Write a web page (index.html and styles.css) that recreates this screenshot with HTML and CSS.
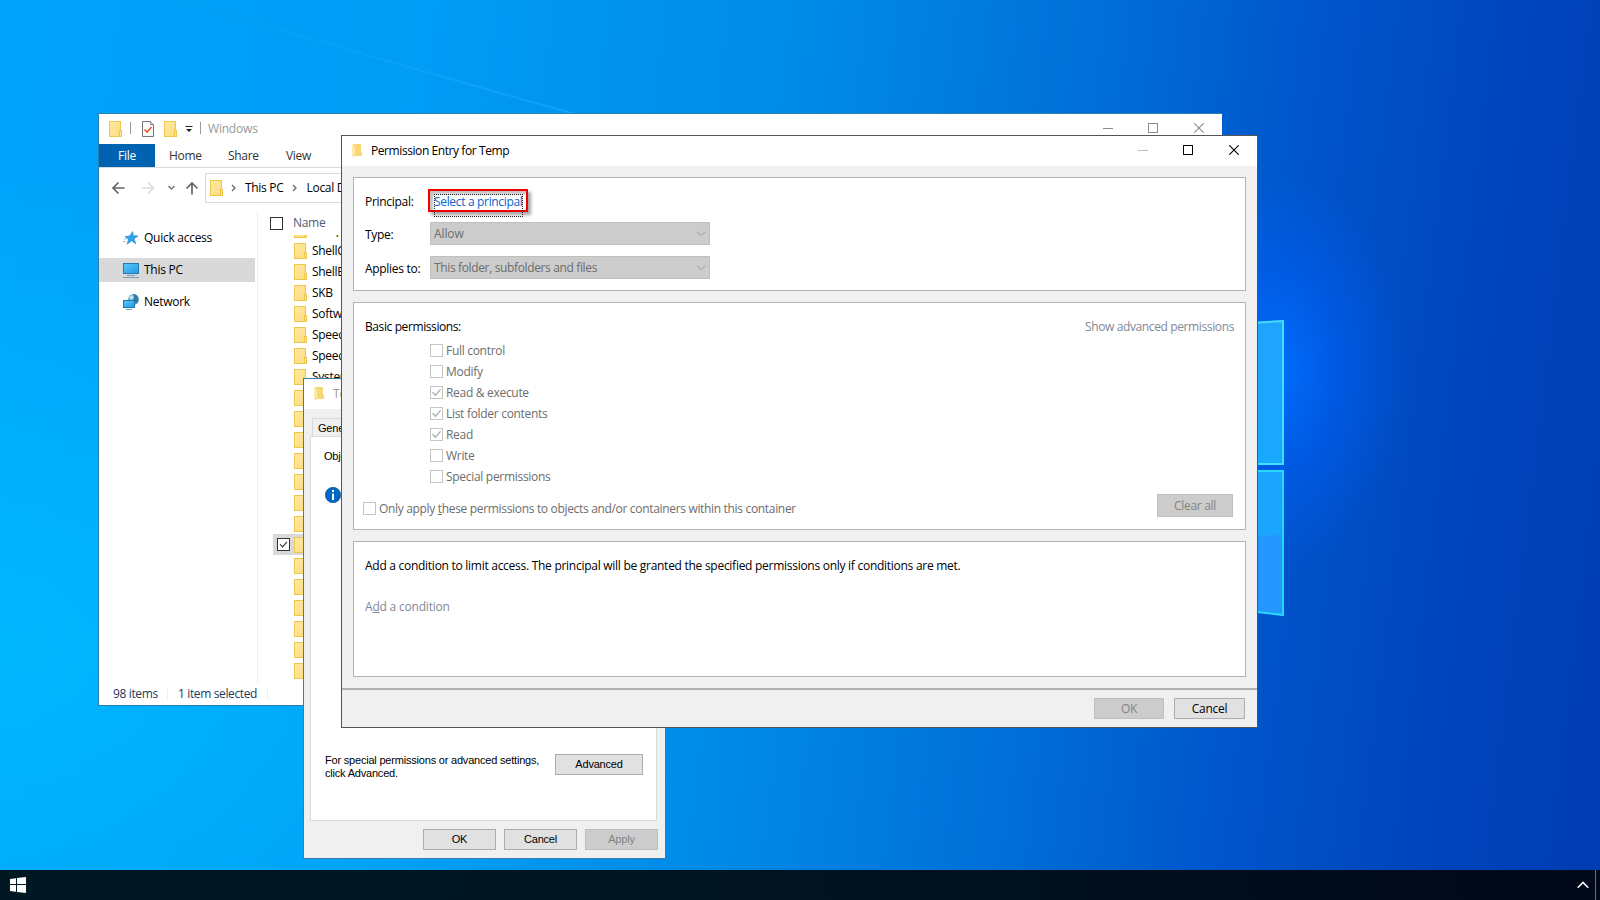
FILE: index.html
```html
<!DOCTYPE html>
<html lang="en">
<head>
  <meta charset="UTF-8" />
  <meta name="viewport" content="width=device-width, initial-scale=1.0" />
  <title>Permission Entry for Temp</title>
  <link rel="stylesheet" href="styles.css">
</head>
<body>
  <svg width="0" height="0" class="defs">
    <defs>
      <linearGradient id="fold" x1="0" y1="0" x2="1" y2="1">
        <stop offset="0" stop-color="#ffeaa5" /><stop offset="1" stop-color="#fbdc7c" />
      </linearGradient>
      <linearGradient id="screen" x1="0" y1="0" x2="1" y2="1">
        <stop offset="0" stop-color="#5cc8fa" /><stop offset="1" stop-color="#1d9bea" />
      </linearGradient>
      <linearGradient id="pane" x1="0" y1="0" x2="0" y2="1">
        <stop offset="0" stop-color="#20a4ff" /><stop offset="1" stop-color="#18a8ff" />
      </linearGradient>
      <linearGradient id="beam" x1="0" y1="0" x2="1" y2="0">
        <stop offset="0" stop-color="#30b4ff" stop-opacity="0" /><stop offset="1" stop-color="#30b4ff" stop-opacity=".4" />
      </linearGradient>
      <symbol id="folder" viewBox="0 0 13 16">
        <rect x=".5" y=".5" width="11" height="15" fill="url(#fold)" stroke="#edc650" />
        <rect x="10.5" y="9.5" width="2" height="6" fill="#ffe692" stroke="#edc650" />
      </symbol>
      <symbol id="folder-small" viewBox="0 0 10 13">
        <path d="M1 0h8v8h1v4H3v1H1V12H0V1h1z" fill="#f8d775" />
        <path d="M0 1l3 1v11l-2-1H0z" fill="#ffe9a8" />
      </symbol>
      <symbol id="tick" viewBox="0 0 13 13">
        <path d="M2.5 6.3l3 3 5-6" fill="none" stroke="currentColor" stroke-width="1.3" />
      </symbol>
      <symbol id="close" viewBox="0 0 10 10">
        <path d="M.3.3l9.4 9.4M9.7.3L.3 9.7" stroke="currentColor" stroke-width="1.1" />
      </symbol>
      <symbol id="chev" viewBox="0 0 10 6">
        <path d="M1 .8l4 4 4-4" fill="none" stroke="currentColor" />
      </symbol>
    </defs>
  </svg>

  <svg class="wallpaper" width="1600" height="870">
    <path d="M180 0Q380 60 575 114" fill="none" stroke="url(#beam)" stroke-width="2" />
    <path d="M1250 323L1283 321V464H1250z" fill="url(#pane)" stroke="#3fe0ff" stroke-width="2" />
    <path d="M1250 471H1283V615L1250 611z" fill="#2397ff" stroke="#25d8ff" stroke-width="2" />
    <path d="M1250 472H1282V534L1250 538z" fill="#1ba5ff" />
  </svg>

  <div class="window explorer">
    <div class="ex-title">
      <svg class="f16"><use href="#folder" /></svg>
      <span class="bar bar-a"></span>
      <svg class="doc" width="12" height="16" viewBox="0 0 12 16">
        <path d="M.5.5h8l3 3v12H.5z" fill="#fbfbfb" stroke="#777" /><path d="M8.5.5v3h3" fill="#ddd" stroke="#888" />
        <path d="M2.5 8.5l2.5 2.5 4.500-5" fill="none" stroke="#f05a28" stroke-width="1.6" />
      </svg>
      <svg class="f16 f-b"><use href="#folder" /></svg>
      <svg class="qat" width="8" height="6" viewBox="0 0 8 6"><path d="M.5 0h7v1h-7zM1 3h6L4 6z" fill="#222" /></svg>
      <span class="bar bar-b"></span>
      <span class="ex-name">Windows</span>
      <div class="caption">
        <i class="min"></i><i class="max"></i><svg width="10" height="10"><use href="#close" /></svg>
      </div>
    </div>
    <div class="ribbon">
      <span class="file">File</span><span class="t-home">Home</span><span class="t-share">Share</span><span class="t-view">View</span>
    </div>
    <div class="nav">
      <svg width="100" height="30" viewBox="0 0 100 30" fill="none">
        <path d="M14 15H25.500M19.500 9.500L14 15l5.500 5.500" stroke="#666" stroke-width="1.700" />
        <path d="M43 15h11.500M49 9.500l5.500 5.500-5.500 5.500" stroke="#ddd" stroke-width="1.700" />
        <path d="M69.500 13l3 3 3-3" stroke="#777" stroke-width="1.500" />
        <path d="M93 21.500V10M87.500 15.500l5.500-5.500 5.500 5.500" stroke="#666" stroke-width="1.700" />
      </svg>
      <div class="address">
        <svg class="f16"><use href="#folder" /></svg>
        <svg class="crumb" width="6" height="8"><path d="M1 1l3 3-3 3" fill="none" stroke="#666" stroke-width="1.300" /></svg>
        <span class="c-pc">This PC</span>
        <svg class="crumb" width="6" height="8"><path d="M1 1l3 3-3 3" fill="none" stroke="#666" stroke-width="1.300" /></svg>
        <span>Local Disk (C:)</span>
      </div>
    </div>
    <div class="ex-body">
      <div class="side">
        <div class="item">
          <svg width="16" height="16" viewBox="0 0 16 16"><path d="M9.500 1.500l.8 4.200 4.700.2-4 2.900 1.800 5-4.300-3-4.300 3.400 1.300-5L2 6.600l4.800-.6z" fill="#2ea3ea" stroke="#1884c8" stroke-width=".6" /><path d="M0 11.500h3M1 9h3" stroke="#8ccaf2" /></svg>
          <span>Quick access</span>
        </div>
        <div class="item on">
          <svg width="16" height="16" viewBox="0 0 16 16"><rect x=".5" y="1.500" width="15" height="10" fill="url(#screen)" stroke="#2478a8" /><path d="M4 13.500h8M0 15.500h16" stroke="#7d9db5" /></svg>
          <span>This PC</span>
        </div>
        <div class="item">
          <svg width="16" height="16" viewBox="0 0 16 16"><circle cx="10.500" cy="5.500" r="5.500" fill="#6fb4d6" /><path d="M10 0a5.500 5.500 0 0 1 3 10l-3-4z" fill="#2e7ba6" /><path d="M6 3l4-2 1 3-3 2z" fill="#c2e2ee" /><rect x=".5" y="6.500" width="11" height="7" fill="url(#screen)" stroke="#2478a8" /><path d="M3 15.500h6" stroke="#7d9db5" /></svg>
          <span>Network</span>
        </div>
      </div>
      <div class="files">
        <div class="head"><i class="box"></i><span>Name</span></div>
        <div class="list" id="list"></div>
      </div>
    </div>
    <div class="status"><span class="s1">98 items</span><span class="s2">1 item selected</span></div>
  </div>

  <div class="window props">
    <div class="pr-title"><svg width="10" height="13"><use href="#folder-small" /></svg><span>Temp Properties</span></div>
    <div class="pr-body">
      <span class="tab">General</span>
      <div class="sheet">
        <p class="obj">Object name:</p>
        <svg width="16" height="16" viewBox="0 0 16 16"><circle cx="8" cy="8" r="7.700" fill="#0067c5" stroke="#04457f" stroke-width=".6" /><path d="M7 3h2v2H7zM7 6.500h2V13H7z" fill="#fff" /></svg>
        <div class="adv">
          <p>For special permissions or advanced settings,<br>click Advanced.</p>
          <button>Advanced</button>
        </div>
      </div>
      <div class="pr-foot"><button>OK</button><button>Cancel</button><button disabled>Apply</button></div>
    </div>
  </div>

  <div class="window entry">
    <div class="en-title">
      <svg width="10" height="13"><use href="#folder-small" /></svg>
      <span>Permission Entry for Temp</span>
      <div class="caption">
        <i class="min"></i><i class="max"></i><svg width="10" height="10"><use href="#close" /></svg>
      </div>
    </div>
    <div class="en-body">
      <div class="panel p1">
        <label>Principal:</label><div class="pick"><a>Select a principal</a></div>
        <label>Type:</label><div class="select"><span class="allow">Allow</span><svg width="10" height="6"><use href="#chev" /></svg></div>
        <label>Applies to:</label><div class="select last"><span class="applies">This folder, subfolders and files</span><svg width="10" height="6"><use href="#chev" /></svg></div>
      </div>
      <div class="panel p2">
        <div class="row"><span class="basic">Basic permissions:</span><span class="muted show">Show advanced permissions</span></div>
        <div class="perms">
          <div class="perm"><i class="cb"></i>Full control</div>
          <div class="perm"><i class="cb"></i>Modify</div>
          <div class="perm"><i class="cb"><svg width="13" height="13"><use href="#tick" /></svg></i>Read &amp; execute</div>
          <div class="perm"><i class="cb"><svg width="13" height="13"><use href="#tick" /></svg></i>List folder contents</div>
          <div class="perm"><i class="cb"><svg width="13" height="13"><use href="#tick" /></svg></i>Read</div>
          <div class="perm"><i class="cb"></i>Write</div>
          <div class="perm"><i class="cb"></i>Special permissions</div>
        </div>
        <div class="row only">
          <div class="perm"><i class="cb"></i><span>Only apply <u>t</u>hese permissions to objects and/or containers within this container</span></div>
          <button disabled>Clear all</button>
        </div>
      </div>
      <div class="panel p3">
        <p class="limit">Add a condition to limit access. The principal will be granted the specified permissions only if conditions are met.</p>
        <p class="muted add">A<u>d</u>d a condition</p>
      </div>
    </div>
    <div class="en-foot"><button disabled>OK</button><button>Cancel</button></div>
  </div>

  <div class="taskbar">
    <svg width="16" height="16" viewBox="0 0 16 16"><path d="M0 2L6 1.200V7H0zM7 1L16 0V7H7zM0 8H6V14.800L0 14zM7 8H16V16L7 15z" fill="#fff" /></svg>
    <svg class="tray" width="12" height="8" viewBox="0 0 12 8"><path d="M.7 6.700L6 1.400l5.300 5.300" fill="none" stroke="#fff" stroke-width="1.500" /></svg>
    <span class="peek"></span>
  </div>

  <script>
    const names = ["Setup", "ShellComponents", "ShellExperiences", "SKB", "SoftwareDistribution", "Speech", "Speech_OneCore", "System"];
    const list = document.getElementById("list");
    for (let i = 0; i < 22; i++) {
      const row = document.createElement("div");
      row.className = i === 15 ? "file-row picked" : "file-row";
      row.innerHTML = (i === 15 ? '<i class="box"><svg width="11" height="11"><use href="#tick" /></svg></i>' : "") +
        '<svg class="f16"><use href="#folder" /></svg><span>' + (names[i] || "") + "</span>";
      list.appendChild(row);
    }
  </script>
</body>
</html>
```
FILE: styles.css
```css
* {
  box-sizing: border-box;
}
body {
  margin: 0;
  width: 1600px;
  height: 900px;
  overflow: hidden;
  position: relative;
  font-family: "Open Sans", "Noto Sans", sans-serif;
  font-size: 12px;
  line-height: 16px;
  letter-spacing: -0.3px;
  color: #000;
  background:
    radial-gradient(ellipse 130px 200px at 1275px 370px, rgba(0, 110, 255, 0.95), rgba(0, 96, 250, 0.5) 50%, rgba(0, 80, 230, 0) 100%),
    radial-gradient(ellipse 700px 500px at 0 650px, rgba(0, 188, 255, 0.8), rgba(0, 184, 255, 0) 100%),
    linear-gradient(97deg, #00a4fb 0%, #009cf5 25%, #008ae8 48%, #0070d8 64%, #0054ca 78%, #0044bc 90%, #003cb2 100%);
}
p {
  margin: 0;
}
svg {
  flex: none;
  display: block;
}
.defs,
.wallpaper {
  position: absolute;
  top: 0;
  left: 0;
}
.f16 {
  width: 13px;
  height: 16px;
}
.window {
  position: absolute;
  display: flex;
  flex-direction: column;
  overflow: hidden;
  white-space: nowrap;
}
button {
  font: inherit;
  letter-spacing: inherit;
  padding: 0;
  height: 21px;
  background: #e1e1e1;
  border: 1px solid #adadad;
  color: #000;
}
button:disabled {
  background: #ccc;
  border-color: #bfbfbf;
  color: #838383;
}
.caption {
  margin-left: auto;
  display: flex;
  align-items: center;
  gap: 35px;
}
.caption svg {
  margin-left: 1px;
}
.min {
  width: 10px;
  height: 1px;
  background: currentColor;
}
.max {
  width: 10px;
  height: 10px;
  border: 1px solid currentColor;
}

/* explorer */
.explorer {
  left: 98px;
  top: 113px;
  width: 1124px;
  height: 593px;
  background: #fff;
  border: 1px solid #2b7fae;
  border-right: 0;
}
.ex-title {
  height: 30px;
  padding: 0 18px 1px 10px;
  display: flex;
  align-items: center;
  color: #999;
}
.ex-title .caption {
  color: #8a8a8a;
  padding-bottom: 1px;
}
.bar {
  width: 1px;
  height: 12px;
  background: #999;
}
.bar-a {
  margin: 0 11px 2px 8px;
}
.doc,
.f-b {
  margin-top: 1px;
}
.f-b {
  margin-left: 10px;
  margin-right: 8px;
}
.bar-b {
  margin: 0 7px 2px 7px;
}
.ex-name {
  letter-spacing: -0.2px;
}
.ribbon {
  height: 24px;
  display: flex;
  line-height: 24px;
  color: #333;
  border-bottom: 1px solid #dadada;
  letter-spacing: -0.3px;
}
.file {
  width: 56px;
  height: 23px;
  text-align: center;
  background: #0063b1;
  color: #fff;
}
.t-home {
  margin-left: 14px;
  width: 59px;
}
.t-share {
  width: 58px;
}
.nav {
  height: 43px;
  display: flex;
  padding-top: 5px;
}
.address {
  flex: 1;
  margin-left: 6px;
  height: 30px;
  border: 1px solid #d9d9d9;
  display: flex;
  align-items: center;
  padding-left: 4px;
}
.crumb {
  margin: 0 9px 0 8px;
}
.c-pc {
  margin-left: -1px;
}
.ex-body {
  flex: 1;
  display: flex;
  min-height: 0;
}
.side {
  width: 159px;
  height: 472px;
  border-right: 1px solid #f1f1f1;
  padding-top: 15px;
}
.item {
  width: 156px;
  height: 24px;
  margin-bottom: 8px;
  padding-left: 24px;
  display: flex;
  align-items: center;
  gap: 5px;
  letter-spacing: -0.27px;
}
.item.on {
  background: #d9d9d9;
}
.files {
  flex: 1;
  padding-left: 15px;
}
.head {
  height: 24px;
  display: flex;
  gap: 10px;
  align-items: center;
  color: #4c607a;
}
.head .box {
  margin-left: -3px;
}
.box {
  width: 13px;
  height: 13px;
  border: 1px solid #333;
  background: #fff;
}
.box svg {
  color: #333;
}
.list {
  height: 446px;
  overflow: hidden;
  display: flex;
  flex-direction: column;
  justify-content: flex-end;
}
.file-row {
  flex: none;
  height: 21px;
  padding-left: 21px;
  display: flex;
  align-items: center;
  gap: 5px;
}
.picked {
  padding-left: 4px;
  gap: 4px;
  background: #d9d9d9;
}
.status {
  height: 24px;
  display: flex;
  align-items: center;
  padding-left: 14px;
  color: #1e395b;
  letter-spacing: -0.37px;
}
.status span {
  line-height: 11px;
  border-right: 1px solid #eee;
}
.s1 {
  width: 55px;
}
.s2 {
  padding-left: 10px;
  width: 100px;
}

/* properties */
.props {
  left: 303px;
  top: 378px;
  width: 363px;
  height: 481px;
  background: #f0f0f0;
  border: 1px solid #3a7da6;
  font-family: "Liberation Sans", sans-serif;
  font-size: 11px;
  line-height: 13px;
  letter-spacing: -0.2px;
}
.pr-title {
  height: 30px;
  background: #fff;
  display: flex;
  align-items: center;
  gap: 9px;
  padding: 0 0 1px 10px;
  font: 12px "Open Sans", sans-serif;
  color: #999;
}
.pr-body {
  padding: 9px 8px 0 6px;
}
.tab {
  display: block;
  width: 60px;
  height: 18px;
  margin-left: 2px;
  padding: 3px 5px;
  border: 1px solid #d9d9d9;
  border-bottom: 0;
}
.sheet {
  height: 385px;
  background: #fff;
  border: 1px solid #dcdcdc;
  padding: 13px 13px 0;
}
.sheet > svg {
  margin: 24px 0 0 1px;
}
.adv {
  margin-top: 251px;
  display: flex;
  justify-content: space-between;
}
.adv p {
  padding-left: 1px;
}
.adv button {
  width: 88px;
}
.pr-foot {
  display: flex;
  justify-content: flex-end;
  gap: 8px;
  padding-top: 8px;
  margin-right: -1px;
}
.pr-foot button {
  width: 73px;
}

/* permission entry */
.entry {
  left: 341px;
  top: 135px;
  width: 917px;
  height: 593px;
  background: #f0f0f0;
  border: 1px solid #555;
}
.en-title {
  height: 30px;
  background: #fff;
  display: flex;
  align-items: center;
  padding: 0 18px 0 11px;
}
.en-title > svg {
  margin: 0 1px 1px -1px;
}
.en-title > span {
  margin-left: 8px;
  letter-spacing: -0.42px;
}
.en-title .caption {
  padding-bottom: 2px;
}
.en-title .min {
  background: #bbb;
}
.en-body {
  height: 524px;
  padding: 11px 11px 0;
  display: flex;
  flex-direction: column;
  gap: 11px;
  border-bottom: 2px solid #b0b0b0;
}
.panel {
  background: #fff;
  border: 1px solid #b3b3b3;
  padding: 0 11px;
}
.p1 {
  height: 114px;
  padding-top: 11px;
  display: grid;
  grid-template-columns: 65px 280px;
  grid-template-rows: 33px 34px 23px;
}
.p1 label {
  line-height: 25px;
}
.pick {
  width: 100px;
  height: 23px;
  margin-left: -2px;
  border: 2px solid #f00000;
  background: #fff;
  box-shadow: 3px 3px 3px rgba(0, 0, 0, 0.35), inset 3px 3px 3px rgba(0, 0, 0, 0.25);
}
.pick a {
  display: block;
  width: 89px;
  height: 23px;
  margin: 3px 0 0 4px;
  line-height: 14px;
  text-indent: -1px;
  border: 1px dotted #222;
  color: #0a62cc;
  letter-spacing: -0.33px;
}
.select {
  height: 23px;
  background: #ccc;
  border: 1px solid #bfbfbf;
  color: #6d6d6d;
  display: flex;
  align-items: center;
  justify-content: space-between;
  padding: 0 3px;
}
.select svg {
  color: #999;
}
.allow {
  letter-spacing: -0.1px;
}
.applies {
  letter-spacing: -0.36px;
}
.p2 {
  height: 228px;
  padding-top: 16px;
}
.row {
  display: flex;
  justify-content: space-between;
}
.basic {
  letter-spacing: -0.4px;
}
.muted {
  color: #838799;
}
.show {
  letter-spacing: -0.38px;
}
.perms {
  padding: 5px 0 0 65px;
}
.perm {
  height: 21px;
  display: flex;
  align-items: center;
  gap: 3px;
  color: #6d6d6d;
}
.cb {
  width: 13px;
  height: 13px;
  border: 1px solid #c4c4c4;
  flex: none;
}
.cb svg {
  margin: -1px;
  color: #aaa;
}
.only {
  margin: 7px 1px 0 -2px;
}
.only .perm {
  margin-top: 4px;
  letter-spacing: -0.325px;
}
.only button {
  width: 76px;
  height: 23px;
}
.p3 {
  height: 136px;
  padding-top: 16px;
}
.limit {
  letter-spacing: -0.273px;
}
.add {
  margin-top: 25px;
  letter-spacing: -0.2px;
}
.en-foot {
  display: flex;
  justify-content: flex-end;
  gap: 10px;
  padding: 8px 12px 0 0;
}
.en-foot button {
  width: 70px;
}
.en-foot button:last-child {
  width: 71px;
}

/* taskbar */
.taskbar {
  position: absolute;
  left: 0;
  top: 870px;
  width: 1600px;
  height: 30px;
  display: flex;
  align-items: center;
  padding: 0 4px 0 10px;
  background: linear-gradient(90deg, #001822, #00141f 45%, #00081a);
}
.tray {
  margin-left: auto;
}
.peek {
  width: 1px;
  height: 30px;
  margin-left: 6px;
  background: #666d78;
}
```
